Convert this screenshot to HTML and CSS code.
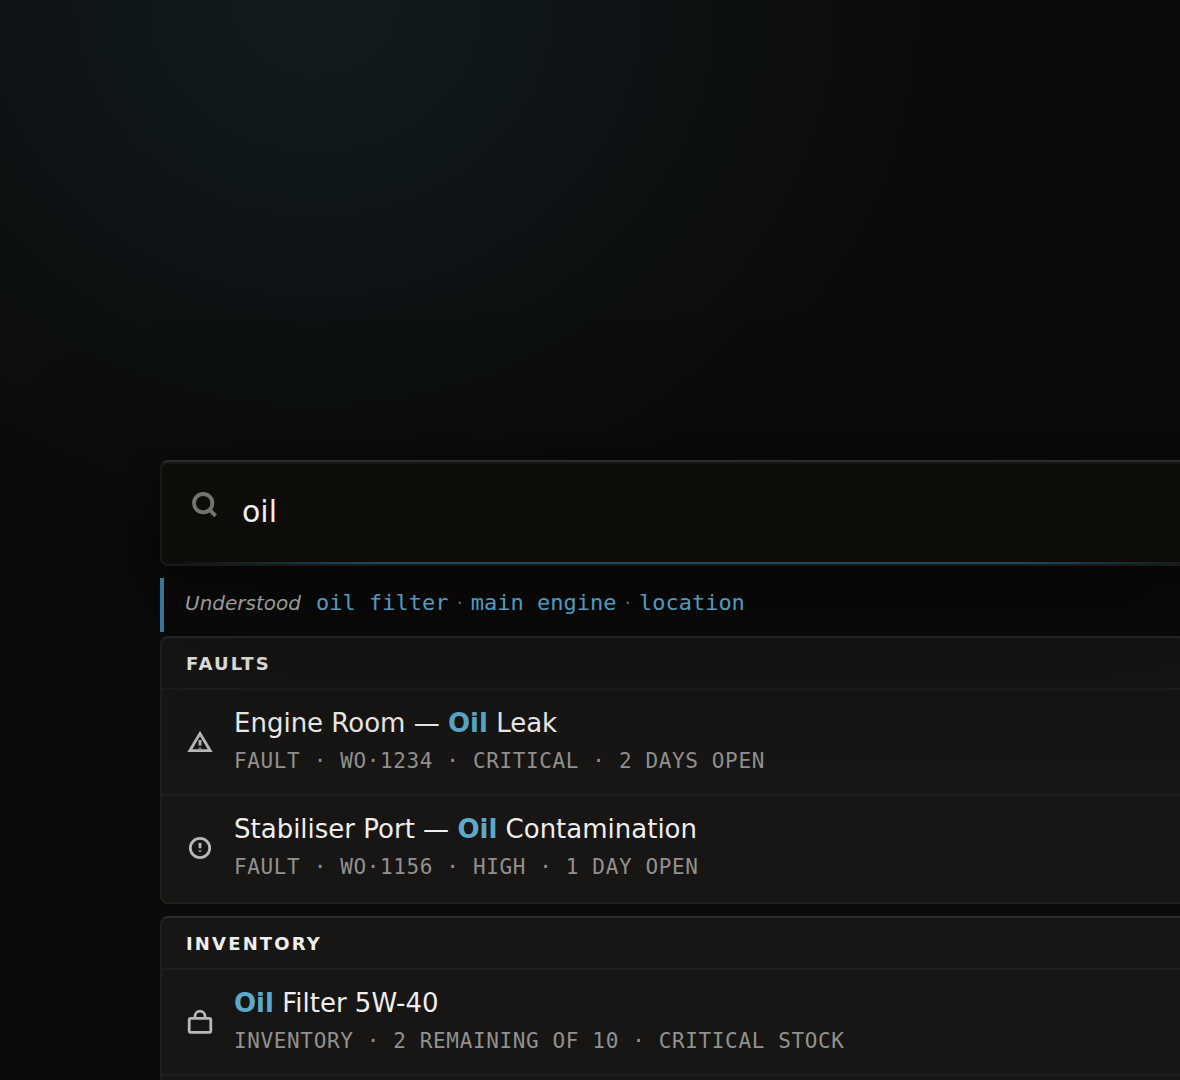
FILE: index.html
```html
<!DOCTYPE html>
<html lang="en">
  <head>
    <meta charset="UTF-8" />
    <meta name="viewport" content="width=device-width, initial-scale=1.0" />
    <title>Search</title>
    <link rel="stylesheet" href="styles.css">
  </head>
  <body>
    <main class="page">
      <div class="search">
        <svg class="search-icon" viewBox="0 0 32 32">
          <circle cx="15.2" cy="13.2" r="9.2" />
          <path d="M21.4 19.6l6.2 6.2" />
        </svg>
        <span class="query">oil</span>
      </div>

      <div class="understood">
        <em>Understood</em>
        <span class="term">oil filter</span>
        <span class="dot">·</span>
        <span class="term">main engine</span>
        <span class="dot">·</span>
        <span class="term">location</span>
      </div>

      <section class="group">
        <h2>Faults</h2>
        <div class="row">
          <svg class="icon" viewBox="0 0 28 28">
            <path d="M14 5.5L24.2 22.7H3.8z" />
            <path d="M14 12v5.4M14 19.8v1" />
          </svg>
          <div>
            <p class="title">Engine Room — <b>Oil</b> Leak</p>
            <p class="meta">FAULT · WO·1234 · CRITICAL · 2 DAYS OPEN</p>
          </div>
        </div>
        <div class="row">
          <svg class="icon" viewBox="0 0 28 28">
            <circle cx="14" cy="14" r="9.7" />
            <path d="M14 9v5.2M14 16.6v1.2" />
          </svg>
          <div>
            <p class="title">Stabiliser Port — <b>Oil</b> Contamination</p>
            <p class="meta">FAULT · WO·1156 · HIGH · 1 DAY OPEN</p>
          </div>
        </div>
      </section>

      <section class="group">
        <h2>Inventory</h2>
        <div class="row">
          <svg class="icon" viewBox="0 0 28 28">
            <rect x="3.2" y="10.4" width="21.6" height="14" rx="1.6" />
            <path d="M9 10V8.2a5 5 0 0 1 10 0V10" />
          </svg>
          <div>
            <p class="title"><b>Oil</b> Filter 5W-40</p>
            <p class="meta">INVENTORY · 2 REMAINING OF 10 · CRITICAL STOCK</p>
          </div>
        </div>
        <div class="row"></div>
      </section>
    </main>
  </body>
</html>
```
FILE: styles.css
```css
* {
  box-sizing: border-box;
}

body {
  margin: 0;
  height: 1080px;
  overflow: hidden;
  background-color: #0c0b0a;
  color: #f0efed;
  font-family: "DejaVu Sans", sans-serif;
}

.page {
  width: 1400px;
  height: 1080px;
  padding: 460px 160px 0;
  overflow: hidden;
  background: radial-gradient(ellipse 600px 540px at 315px 0, #111b1e 0%, #10171a 28%, #0d1112 60%, #0c0b0a 100%);
}

.search {
  position: relative;
  z-index: 1; /* keeps the shadow over the results */
  display: flex;
  align-items: center;
  height: 106px;
  padding: 0 28px 2px 26px;
  border: 2px solid #1a1917;
  border-top-color: #2c2b29;
  border-radius: 8px;
  background: #0d0c09;
  box-shadow: 0 48px 160px rgba(0, 0, 0, 0.5), 0 8px 32px rgba(0, 0, 0, 0.4), inset 0 2px 0 #181715;
}

.search::after {
  content: "";
  position: absolute;
  left: 0;
  right: 0;
  bottom: 0;
  height: 2px;
  background: linear-gradient(90deg, transparent, #24485a 20%, #24485a 80%, transparent);
}

.search-icon {
  width: 32px;
  height: 32px;
  margin: -12px 22px 0 0;
  fill: none;
  stroke: #747372;
  stroke-width: 3.8;
}

.query {
  font-size: 30px;
  line-height: 36px;
}

.understood {
  position: relative;
  z-index: 2;
  display: flex;
  align-items: center;
  height: 54px;
  margin: 12px 0 4px;
  padding: 0 0 6px 20px;
  border-left: 4px solid #3b7594;
  font-size: 20px;
}

.understood em {
  margin: 2px 15px 0 1px;
  color: #9a9998;
}

.term {
  color: #4f9bbf;
  font-family: "DejaVu Sans Mono", monospace;
  font-size: 22px;
}

.dot {
  width: 22.4px;
  padding-top: 2px;
  color: #63625f;
  text-align: center;
}

.group {
  margin-bottom: 12px;
  border: 2px solid #21201e;
  border-top-color: #2b2a29;
  border-radius: 8px;
  background: #171614;
}

h2 {
  height: 52px;
  margin: 0;
  padding-left: 24px;
  border-bottom: 2px solid #1f1e1d;
  font-size: 18px;
  line-height: 52px;
  letter-spacing: 2.16px;
  text-transform: uppercase;
}

.row {
  display: flex;
  align-items: center;
  height: 106px;
  padding: 0 24px;
  border-bottom: 2px solid #1f1e1d;
}

.row:last-child {
  border-bottom-color: transparent;
}

.icon {
  width: 28px;
  height: 28px;
  margin-right: 20px;
  fill: none;
  stroke: #b9b8b6;
  stroke-width: 2.8;
}

p {
  margin: 0;
}

.title {
  font-size: 26px;
  line-height: 36px;
  padding-bottom: 2px;
}

.title b {
  color: #5ba9cb;
}

.meta {
  color: #92918f;
  font-family: "DejaVu Sans Mono", monospace;
  font-size: 21px;
  line-height: 36px;
  letter-spacing: 0.63px;
}
```
